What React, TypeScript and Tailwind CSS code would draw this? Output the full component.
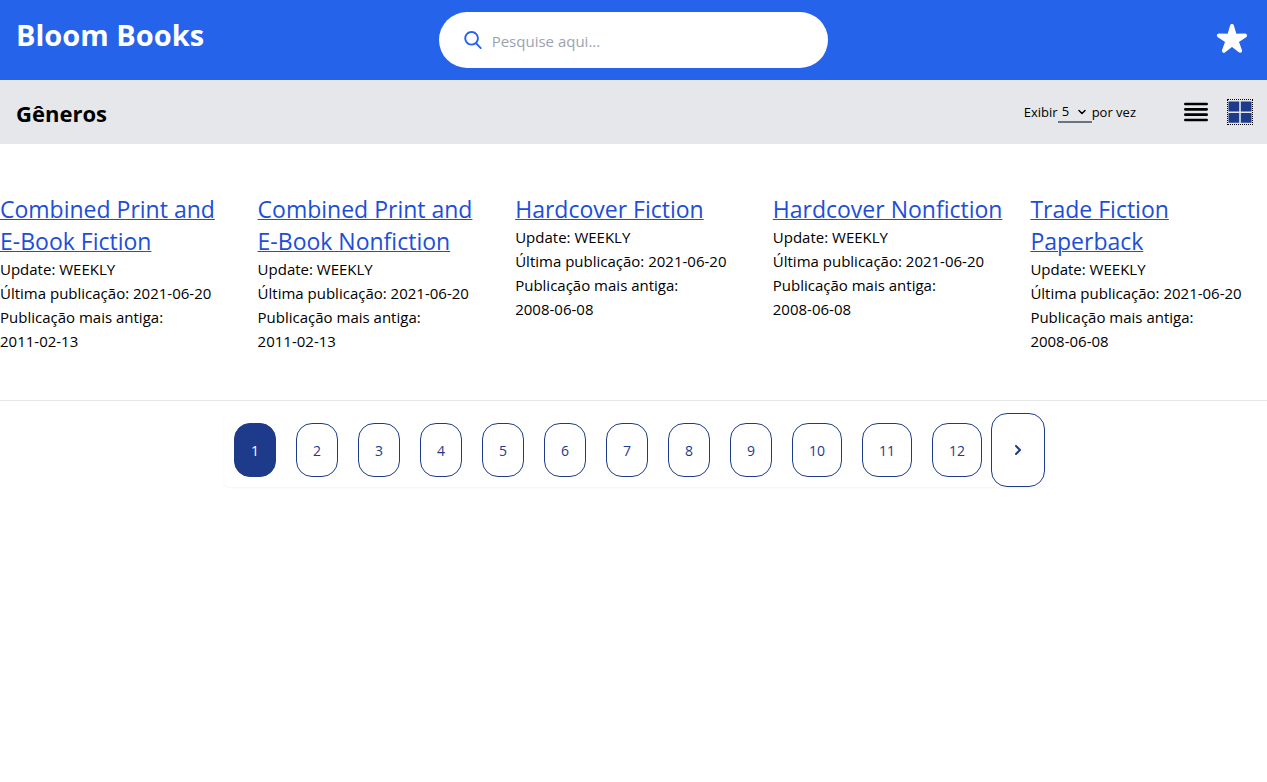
import { ChevronDown } from "lucide-react";

type Genre = {
  name: string;
  last: string;
  oldest: string;
};

const genres: Genre[] = [
  { name: "Combined Print and E-Book Fiction", last: "2021-06-20", oldest: "2011-02-13" },
  { name: "Combined Print and E-Book Nonfiction", last: "2021-06-20", oldest: "2011-02-13" },
  { name: "Hardcover Fiction", last: "2021-06-20", oldest: "2008-06-08" },
  { name: "Hardcover Nonfiction", last: "2021-06-20", oldest: "2008-06-08" },
  { name: "Trade Fiction Paperback", last: "2021-06-20", oldest: "2008-06-08" },
];

const pages = [1, 2, 3, 4, 5, 6, 7, 8, 9, 10, 11, 12];
const currentPage = 1;

function SearchIcon() {
  return (
    <svg className="size-[18px] shrink-0 text-[#2563eb]" viewBox="0 0 56.966 56.966" fill="currentColor" aria-hidden="true">
      <path d="M55.146,51.887L41.588,37.786c3.486-4.144,5.396-9.358,5.396-14.786c0-12.682-10.318-23-23-23s-23,10.318-23,23s10.318,23,23,23c4.761,0,9.298-1.436,13.177-4.162l13.661,14.208c0.571,0.593,1.339,0.92,2.162,0.92c0.779,0,1.518-0.297,2.079-0.837C56.255,54.982,56.293,53.08,55.146,51.887z M23.984,6c9.374,0,17,7.626,17,17s-7.626,17-17,17s-17-7.626-17-17S14.61,6,23.984,6z" />
    </svg>
  );
}

function StarIcon() {
  return (
    <svg className="size-8" viewBox="0 0 32 32" fill="currentColor" stroke="currentColor" strokeWidth="4" strokeLinejoin="round" aria-hidden="true">
      <path d="M16 2L18.82 11.82L29.03 11.47L20.57 17.18L24.05 26.78L16 20.5L7.95 26.78L11.43 17.18L2.97 11.47L13.18 11.82Z" />
    </svg>
  );
}

function ListIcon() {
  return (
    <svg className="size-8" viewBox="0 0 24 24" fill="none" stroke="currentColor" strokeWidth="2" strokeLinecap="round" aria-hidden="true">
      <path d="M4 6h16M4 10h16M4 14h16M4 18h16" />
    </svg>
  );
}

function GridIcon() {
  return (
    <svg className="size-6" viewBox="0 0 24 24" fill="currentColor" aria-hidden="true">
      <path d="M0.5 1.5h10.7v10H0.5zM12.8 1.5h10.7v10H12.8zM0.5 13h10.7v9.7H0.5zM12.8 13h10.7v9.7H12.8z" />
    </svg>
  );
}

function NextIcon() {
  return (
    <svg className="size-5" viewBox="0 0 20 20" fill="currentColor" aria-hidden="true">
      <path fillRule="evenodd" clipRule="evenodd" d="M7.293 14.707a1 1 0 010-1.414L10.586 10 7.293 6.707a1 1 0 011.414-1.414l4 4a1 1 0 010 1.414l-4 4a1 1 0 01-1.414 0z" />
    </svg>
  );
}

function Header() {
  return (
    <header className="grid h-20 grid-cols-3 items-center bg-[#2563eb] px-4 text-white">
      <a href="#" className="self-start pt-[15px] text-[29px] leading-10 font-bold">
        Bloom Books
      </a>
      <label className="mx-[11px] flex h-14 items-center gap-[10px] rounded-full bg-white pr-6 pl-[25px]">
        <SearchIcon />
        <input
          type="search"
          aria-label="Pesquisar"
          placeholder="Pesquise aqui..."
          className="w-full min-w-0 bg-transparent pt-0.5 text-[15px] leading-6 text-black outline-none placeholder:text-[#9ca3af]"
        />
      </label>
      <a href="#" aria-label="Favoritos" className="mr-[3px] justify-self-end">
        <StarIcon />
      </a>
    </header>
  );
}

function Toolbar() {
  return (
    <div className="flex h-16 items-center justify-between bg-[#e5e7eb] pr-[14px] pl-4">
      <h1 className="pt-0.5 text-[22px] leading-8 font-bold">Gêneros</h1>
      <div className="flex items-center">
        <div className="flex items-center text-[13px] leading-5">
          <label htmlFor="per-page">Exibir</label>
          <span className="relative flex">
            <select id="per-page" defaultValue="5" className="h-[22px] w-[34px] appearance-none border-b-2 border-[#6b7280] bg-transparent pl-1">
              <option>5</option>
              <option>10</option>
              <option>15</option>
              <option>20</option>
            </select>
            <ChevronDown className="pointer-events-none absolute top-[5px] right-1 size-3" strokeWidth={3} aria-hidden="true" />
          </span>
          <span>por vez</span>
        </div>
        <button type="button" aria-label="Exibir em lista" className="ml-11">
          <ListIcon />
        </button>
        <button type="button" aria-label="Exibir em grade" className="ml-[15px] border border-dotted border-black text-[#1e3a8a]">
          <GridIcon />
        </button>
      </div>
    </div>
  );
}

function GenreCard({ name, last, oldest }: Genre) {
  return (
    <article className="text-[15px] leading-6">
      <h2 className="text-[23px] leading-8">
        <a href="#" className="text-[#1d4ed8] underline decoration-1">
          {name}
        </a>
      </h2>
      <p>Update: WEEKLY</p>
      <p>Última publicação: {last}</p>
      <p>
        Publicação mais antiga: <span className="inline-block">{oldest}</span>
      </p>
    </article>
  );
}

function Pagination() {
  return (
    <div className="flex justify-center border-t border-[#e5e7eb] py-3 pl-0.5">
      <nav aria-label="Paginação" className="flex items-center rounded-md text-sm leading-5 text-[#1e3a8a] shadow-xs">
        {pages.map((page) => (
          <button
            key={page}
            type="button"
            aria-current={page === currentPage ? "page" : undefined}
            className={
              page === currentPage
                ? "mx-[10px] h-[54px] w-[42px] rounded-2xl border border-[#1e3a8a] bg-[#1e3a8a] pt-0.5 text-white"
                : page < 10
                  ? "mx-[10px] h-[54px] w-[42px] rounded-2xl border border-[#1e3a8a] pt-0.5"
                  : "mx-[10px] h-[54px] w-[50px] rounded-2xl border border-[#1e3a8a] pt-0.5"
            }
          >
            {page}
          </button>
        ))}
        <button type="button" aria-label="Próxima" className="-ml-px flex h-[74px] w-[54px] items-center justify-center rounded-2xl border border-[#1e3a8a]">
          <NextIcon />
        </button>
      </nav>
    </div>
  );
}

export default function App() {
  return (
    <div className="bg-white font-['Open_Sans','Noto_Sans',sans-serif] text-black">
      <Header />
      <Toolbar />
      <main>
        <section className="grid grid-cols-5 gap-x-[21px] pt-[49px] pb-[47px]">
          {genres.map((genre) => (
            <GenreCard key={genre.name} {...genre} />
          ))}
        </section>
        <Pagination />
      </main>
    </div>
  );
}
